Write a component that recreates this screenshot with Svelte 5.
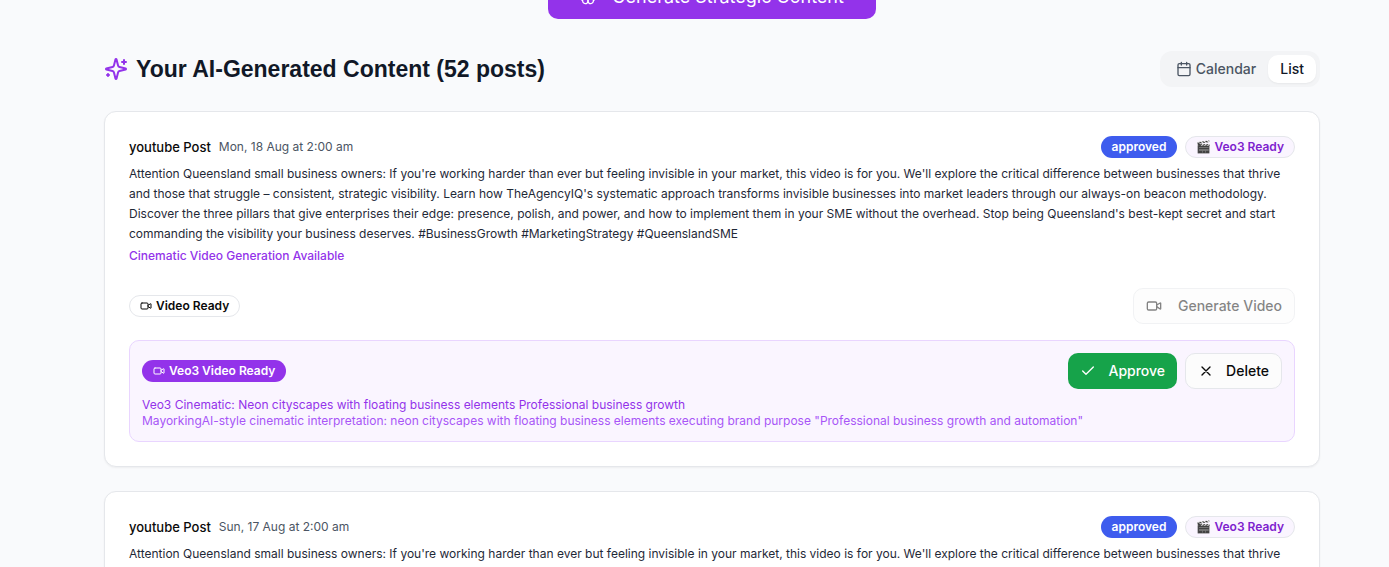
<script>
  const caption =
    "Attention Queensland small business owners: If you're working harder than ever but feeling invisible in your market, this video is for you. We'll explore the critical difference between businesses that thrive and those that struggle – consistent, strategic visibility. Learn how TheAgencyIQ's systematic approach transforms invisible businesses into market leaders through our always-on beacon methodology. Discover the three pillars that give enterprises their edge: presence, polish, and power, and how to implement them in your SME without the overhead. Stop being Queensland's best-kept secret and start commanding the visibility your business deserves. #BusinessGrowth #MarketingStrategy #QueenslandSME";

  const posts = [
    { id: 1, platform: 'youtube', date: 'Mon, 18 Aug at 2:00 am', status: 'approved' },
    { id: 2, platform: 'youtube', date: 'Sun, 17 Aug at 2:00 am', status: 'approved' }
  ];

  let view = $state('list');
</script>

{#snippet video(size)}
  <svg class="icon" width={size} height={size} viewBox="0 0 24 24" aria-hidden="true">
    <path d="m16 13 5.223 3.482a.5.5 0 0 0 .777-.416V7.87a.5.5 0 0 0-.752-.432L16 10.5" />
    <rect x="2" y="6" width="14" height="12" rx="2" />
  </svg>
{/snippet}

<main>
  <button class="generate">
    <svg class="icon" width="16" height="16" viewBox="0 0 24 24" aria-hidden="true">
      <path d="M12 5a3 3 0 1 0-5.997.125 4 4 0 0 0-2.526 5.77 4 4 0 0 0 .556 6.588A4 4 0 1 0 12 18Z" />
      <path d="M12 5a3 3 0 1 1 5.997.125 4 4 0 0 1 2.526 5.77 4 4 0 0 1-.556 6.588A4 4 0 1 1 12 18Z" />
      <path d="M15 13a4.5 4.5 0 0 1-3-4 4.5 4.5 0 0 1-3 4" />
    </svg>
    Generate Strategic Content
  </button>

  <header>
    <h2>
      <svg class="icon sparkle" width="24" height="24" viewBox="0 0 24 24" aria-hidden="true">
        <path d="M9.937 15.5A2 2 0 0 0 8.5 14.063l-6.135-1.582a.5.5 0 0 1 0-.962L8.5 9.936A2 2 0 0 0 9.937 8.5l1.582-6.135a.5.5 0 0 1 .963 0L14.063 8.5A2 2 0 0 0 15.5 9.937l6.135 1.581a.5.5 0 0 1 0 .964L15.5 14.063a2 2 0 0 0-1.437 1.437l-1.582 6.135a.5.5 0 0 1-.963 0z" />
        <path d="M20 3v4M22 5h-4M4 17v2M5 18H3" />
      </svg>
      Your AI-Generated Content (52 posts)
    </h2>
    <div class="toggle">
      <button class:active={view === 'calendar'} onclick={() => (view = 'calendar')}>
        <svg class="icon" width="16" height="16" viewBox="0 0 24 24" aria-hidden="true">
          <path d="M8 2v4M16 2v4M3 10h18" />
          <rect x="3" y="4" width="18" height="18" rx="2" />
        </svg>
        Calendar
      </button>
      <button class:active={view === 'list'} onclick={() => (view = 'list')}>List</button>
    </div>
  </header>

  <div class="posts">
    {#each posts as post (post.id)}
      <article>
        <div class="row">
          <div class="title">
            <h3>{post.platform} Post</h3>
            <time>{post.date}</time>
          </div>
          <div class="group">
            <span class="badge approved">{post.status}</span>
            <span class="badge veo">🎬 Veo3 Ready</span>
          </div>
        </div>
        <p class="caption">{caption}</p>
        <p class="available">Cinematic Video Generation Available</p>

        <div class="row actions">
          <span class="badge outline">{@render video(12)} Video Ready</span>
          <button class="btn wide" disabled>{@render video(16)} Generate Video</button>
        </div>

        <section class="panel">
          <div class="row">
            <span class="badge solid">{@render video(12)} Veo3 Video Ready</span>
            <div class="group">
              <button class="btn approve">
                <svg class="icon" width="16" height="16" viewBox="0 0 24 24" aria-hidden="true"><path d="M20 6 9 17l-5-5" /></svg>
                Approve
              </button>
              <button class="btn">
                <svg class="icon" width="16" height="16" viewBox="0 0 24 24" aria-hidden="true"><path d="M18 6 6 18M6 6l12 12" /></svg>
                Delete
              </button>
            </div>
          </div>
          <div class="notes">
            <p>Veo3 Cinematic: Neon cityscapes with floating business elements Professional business growth</p>
            <p class="soft">MayorkingAI-style cinematic interpretation: neon cityscapes with floating business elements executing brand purpose "Professional business growth and automation"</p>
          </div>
        </section>
      </article>
    {/each}
  </div>
</main>

<style>
  :global(body) {
    margin: 0;
    background: #f9fafc;
  }
  main {
    box-sizing: border-box;
    height: 100vh;
    overflow: hidden;
    padding: 0 69px 0 104px;
    background: #f9fafc;
    color: #0a0a0a;
    font-family: Inter, "Liberation Sans", sans-serif;
    font-size: 14px;
    line-height: 20px;
  }
  h2, h3, p {
    margin: 0;
  }
  button {
    font: inherit;
    color: inherit;
    border: 0;
    cursor: pointer;
  }
  .icon {
    flex: none;
    fill: none;
    stroke: currentColor;
    stroke-width: 2;
    stroke-linecap: round;
    stroke-linejoin: round;
  }
  .generate {
    display: flex;
    align-items: center;
    gap: 16px;
    height: 44px;
    margin: -25px auto 32px;
    padding: 0 32px;
    border-radius: 10px;
    background: #9333ea;
    color: #fff;
    font-size: 18px;
    font-weight: 400;
  }
  header, .row {
    display: flex;
    align-items: center;
    justify-content: space-between;
  }
  h2 {
    display: flex;
    align-items: center;
    gap: 8px;
    color: #111827;
    font-family: "Liberation Sans", Arial, sans-serif;
    font-size: 23px;
    font-weight: 700;
    line-height: 32px;
  }
  .sparkle {
    color: #9333ea;
  }
  .toggle {
    display: flex;
    padding: 4px;
    border-radius: 12px;
    background: #f3f4f6;
  }
  .toggle button {
    display: flex;
    align-items: center;
    gap: 4px;
    padding: 4px 12px;
    border-radius: 10px;
    background: none;
    color: #4b5563;
    font-weight: 500;
  }
  .toggle button.active {
    background: #fff;
    color: #111827;
    box-shadow: 0 1px 2px rgb(0 0 0 / 5%);
  }
  .posts {
    display: grid;
    gap: 24px;
    margin-top: 24px;
  }
  article {
    padding: 24px;
    border: 1px solid #e5e7eb;
    border-radius: 12px;
    background: #fff;
    box-shadow: 0 1px 2px rgb(0 0 0 / 5%);
  }
  .title, .group {
    display: flex;
    align-items: center;
    gap: 8px;
  }
  h3 {
    font-size: 13px;
    font-weight: 500;
  }
  time {
    color: #4b5563;
    font-size: 12px;
  }
  .badge {
    display: inline-flex;
    align-items: center;
    gap: 4px;
    padding: 2px 10px;
    border: 1px solid transparent;
    border-radius: 11px;
    font-size: 12px;
    font-weight: 600;
    line-height: 16px;
  }
  .approved {
    background: #3e5cee;
    color: #fff;
  }
  .veo {
    border-color: #e5e7eb;
    background: #faf5ff;
    color: #7e22ce;
  }
  .outline {
    border-color: #e5e7eb;
  }
  .solid {
    background: #9333ea;
    color: #fff;
  }
  .caption {
    margin-top: 6px;
    color: #1f2937;
    font-size: 12px;
    line-height: 20px;
  }
  .available {
    margin-top: 4px;
    color: #9333ea;
    font-size: 12px;
    font-weight: 500;
    line-height: 16px;
  }
  .actions {
    margin-top: 24px;
  }
  .btn {
    display: flex;
    align-items: center;
    gap: 12px;
    height: 36px;
    padding: 0 12px;
    border: 1px solid #e5e7eb;
    border-radius: 10px;
    background: #fcfcfc;
    font-weight: 500;
  }
  .btn.wide {
    gap: 16px;
  }
  .btn:disabled {
    opacity: 0.5;
    cursor: default;
  }
  .approve {
    border: 0;
    background: #16a34a;
    color: #fff;
  }
  .panel {
    margin-top: 16px;
    padding: 12px;
    border: 1px solid #e9d5ff;
    border-radius: 10px;
    background: #faf5ff;
  }
  .notes {
    margin-top: 8px;
    color: #9333ea;
    font-size: 12px;
    line-height: 16px;
  }
  .soft {
    color: #a855f7;
  }
</style>
